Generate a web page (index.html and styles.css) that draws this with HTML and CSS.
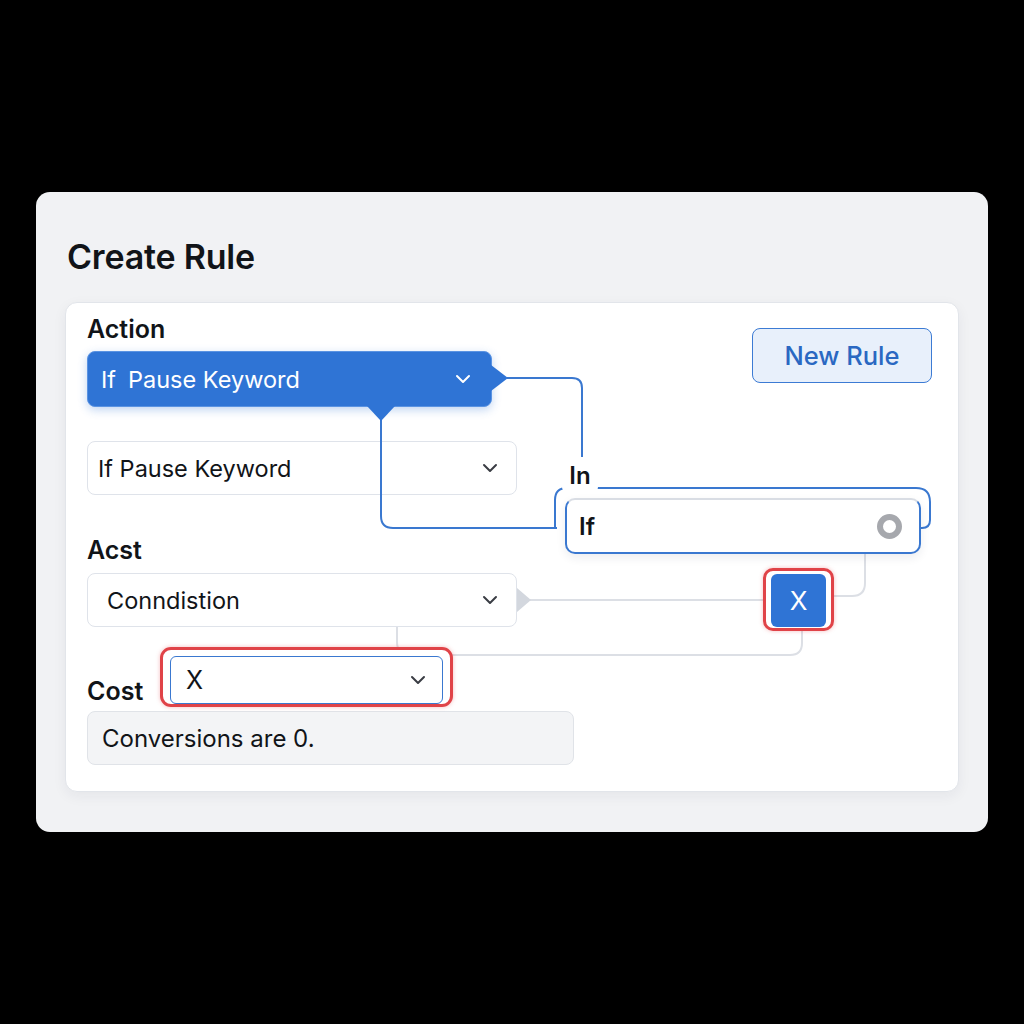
FILE: index.html
```html
<!DOCTYPE html>
<html lang="en">
<head>
    <meta charset="UTF-8">
    <meta name="viewport" content="width=device-width, initial-scale=1.0">
    <title>Create Rule</title>
    <link rel="stylesheet" href="styles.css">
</head>
<body>
<div class="card">
    <h1 class="title">Create Rule</h1>
    <div class="panel">
        <div class="form">
            <div class="label">Action</div>
            <div class="select select-active">
                <span class="val"><span class="kw">If</span>Pause Keyword</span>
                <svg class="chev" viewBox="0 0 16 10"><path d="M2 2l6 6 6-6"/></svg>
            </div>
            <div class="select select-plain">
                <span class="val">If Pause Keyword</span>
                <svg class="chev" viewBox="0 0 16 10"><path d="M2 2l6 6 6-6"/></svg>
            </div>
            <div class="label label-acst">Acst</div>
            <div class="select select-cond">
                <span class="val">Conndistion</span>
                <svg class="chev" viewBox="0 0 16 10"><path d="M2 2l6 6 6-6"/></svg>
            </div>
            <div class="cost-row">
                <div class="label">Cost</div>
                <div class="ring-red">
                    <div class="select select-x">
                        <span class="val">X</span>
                        <svg class="chev" viewBox="0 0 16 10"><path d="M2 2l6 6 6-6"/></svg>
                    </div>
                </div>
            </div>
            <div class="note">Conversions are 0.</div>
        </div>
        <div class="side">
            <button class="btn-new">New Rule</button>
        </div>

        <!-- connectors between the nodes -->
        <svg class="wires" width="894" height="490" viewBox="0 0 894 490">
            <g class="grey">
                <path d="M800 251 V281 Q800 294 787 294 H768"/>
                <path d="M465 298 H698"/>
                <path d="M737 328 V341 Q737 353 725 353 H345 Q332 353 332 340 V325"/>
            </g>
            <polygon class="tip-grey" points="452,286 466,298 452,310"/>
            <g class="blue">
                <path d="M442 76 H507 Q517 76 517 86 V158"/>
                <path d="M316 118 V214 Q316 226 328 226 H492"/>
                <path d="M490 226 V198 Q490 186 502 186 H851 Q865 186 865 200 V218 Q865 226 857 226 H853"/>
            </g>
            <polygon class="tip-blue" points="426,63 443,76 426,89"/>
            <polygon class="tip-blue" points="302,104 316,119 330,104"/>
        </svg>

        <div class="tag-in">In</div>
        <div class="node-if">
            <span>If</span>
            <span class="ring"></span>
        </div>
        <div class="node-x"><span>X</span></div>
    </div>
</div>
</body>
</html>
```
FILE: styles.css
```css
*{
    margin: 0;
    padding: 0;
    box-sizing: border-box;
}
body{
    background: #000;
    font-family: Inter, "Noto Sans", "Liberation Sans", sans-serif;
    color: #111418;
}
.card{
    width: 952px;
    height: 640px;
    margin: 192px 0 0 36px;
    padding: 45px 29px 0 29px;
    background: #f1f2f4;
    border-radius: 14px;
}
.title{
    font-size: 34px;
    line-height: 40px;
    font-weight: 600;
    letter-spacing: -0.2px;
    padding-left: 2px;
}
.panel{
    position: relative;
    margin-top: 25px;
    height: 490px;
    display: grid;
    grid-template-columns: 1fr auto;
    padding: 12px 26px 26px 21px;
    background: #fff;
    border: 1px solid #e2e5ea;
    border-radius: 12px;
    box-shadow: 0 4px 14px rgba(30, 40, 60, 0.06);
}
.label{
    font-size: 25px;
    line-height: 28px;
    font-weight: 600;
}
.label-acst{
    margin-top: 41px;
}
.select{
    display: flex;
    align-items: center;
    justify-content: space-between;
    width: 430px;
    height: 54px;
    padding: 0 18px 0 10px;
    background: #fff;
    border: 1.5px solid #dfe3ea;
    border-radius: 8px;
    font-size: 23.5px;
}
.select .chev{
    width: 16px;
    height: 10px;
    fill: none;
    stroke: #3a3d44;
    stroke-width: 2;
    stroke-linecap: round;
    stroke-linejoin: round;
}
.select-active{
    width: 405px;
    height: 56px;
    margin-top: 8px;
    padding: 0 20px 0 13px;
    background: #2f74d5;
    border: 1.5px solid #5a93e2;
    color: #fff;
    box-shadow: 0 3px 10px rgba(47, 116, 213, 0.3);
}
.select-active .kw{
    margin-right: 12px;
}
.select-active .chev{
    stroke: #fff;
}
.select-plain{
    margin-top: 34px;
}
.select-cond{
    margin-top: 9px;
    padding-left: 19px;
}
.cost-row{
    display: flex;
    align-items: flex-end;
    margin-top: 20px;
}
.cost-row .label{
    width: 73px;
    margin-bottom: 2px;
}
.ring-red{
    position: relative;
    z-index: 2;
    width: 293px;
    height: 60px;
    padding: 6px 7px 0 7px;
    border: 3px solid #e04348;
    border-radius: 11px;
    background: #fff;
    box-shadow: 0 0 4px rgba(224, 67, 72, 0.35);
}
.select-x{
    width: 100%;
    height: 48px;
    padding: 0 16px 0 15px;
    border: 1.5px solid #3a78d0;
    border-radius: 6px;
    font-size: 25px;
}
.note{
    display: flex;
    align-items: center;
    width: 487px;
    height: 54px;
    margin-top: 4px;
    padding-left: 14px;
    background: #f3f4f6;
    border: 1.5px solid #e0e3e8;
    border-radius: 8px;
    font-size: 24px;
}
.side{
    display: flex;
    align-items: flex-start;
}
.btn-new{
    width: 180px;
    height: 55px;
    margin-top: 13px;
    background: #e8f0fb;
    border: 1.5px solid #3c7bd4;
    border-radius: 8px;
    color: #2a68c2;
    font-family: inherit;
    font-size: 25.5px;
    font-weight: 500;
}
.wires{
    position: absolute;
    left: -1px;
    top: -1px;
    z-index: 1;
    overflow: visible;
}
.wires path{
    fill: none;
    stroke-width: 2;
}
.wires .blue path{
    stroke: #3a78d0;
}
.wires .grey path{
    stroke: #dcdfe5;
}
.tip-blue{
    fill: #2f74d5;
}
.tip-grey{
    fill: #d3d7de;
}
.tag-in{
    position: absolute;
    left: 496px;
    top: 154px;
    z-index: 3;
    width: 36px;
    height: 36px;
    padding-top: 4px;
    text-align: center;
    background: #fff;
    border-radius: 6px;
    font-size: 24px;
    font-weight: 600;
}
.node-if{
    position: absolute;
    left: 499px;
    top: 195px;
    z-index: 3;
    display: flex;
    align-items: center;
    justify-content: space-between;
    width: 356px;
    height: 56px;
    padding: 0 17px 0 12px;
    background: #fff;
    border: 2px solid #3a78d0;
    border-top-color: #d9dde4;
    border-radius: 10px;
    box-shadow: 0 4px 10px rgba(30, 40, 60, 0.08);
    font-size: 24px;
    font-weight: 600;
}
.ring{
    width: 25px;
    height: 25px;
    border: 6px solid #a6a8ad;
    border-radius: 50%;
}
.node-x{
    position: absolute;
    left: 697px;
    top: 265px;
    z-index: 3;
    width: 71px;
    height: 63px;
    padding: 3px 5px 1px 5px;
    border: 3px solid #e04348;
    border-radius: 10px;
    background: #fff;
    box-shadow: 0 0 4px rgba(224, 67, 72, 0.35);
}
.node-x span{
    display: flex;
    align-items: center;
    justify-content: center;
    height: 100%;
    background: #2f74d5;
    border-radius: 6px;
    color: #fff;
    font-size: 26px;
}
```
